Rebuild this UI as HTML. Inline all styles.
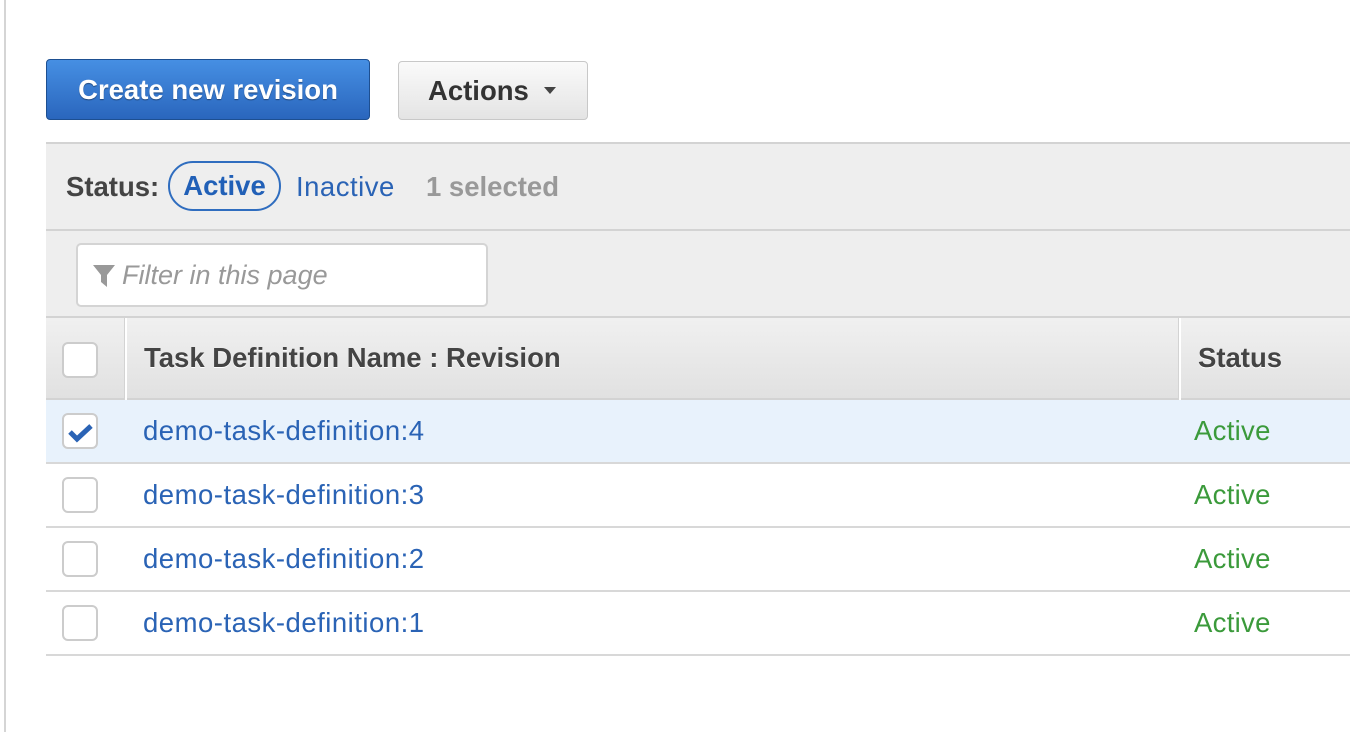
<!DOCTYPE html>
<html><head><style>
*{box-sizing:border-box;margin:0;padding:0}
body{width:1350px;height:732px;background:#fff;font-family:"Liberation Sans",Arial,sans-serif;position:relative;overflow:hidden}
.vl{position:absolute;left:4px;top:0;width:2px;height:732px;background:#d5d5d5}
.btn1{position:absolute;left:46px;top:59px;width:324px;height:61px;border:1px solid #1d4f91;border-radius:4px;background:linear-gradient(#468fe3,#2a66bd);color:#fff;font-weight:bold;font-size:27.5px;text-align:center;line-height:59px;text-shadow:0 1px 1px rgba(0,0,0,.4)}
.btn2{position:absolute;left:398px;top:61px;width:190px;height:59px;border:1px solid #c8c8c8;border-radius:4px;background:linear-gradient(#fafafa,#e4e4e4);color:#333;font-weight:bold;font-size:27.5px;line-height:57px;padding-left:29px}
.btn2 .car{position:absolute;left:145px;top:25px;border-left:6px solid transparent;border-right:6px solid transparent;border-top:7px solid #444}
.sec{position:absolute;left:46px;width:1304px;background:#eee;border-top:2px solid #d3d3d3}
.s1{top:142px;height:89px}
.s2{top:229px;height:89px}
.lbl{position:absolute;top:27px;font-size:27.5px}
.reg{letter-spacing:.5px}
.pill{position:absolute;left:122px;top:17px;width:113px;height:50px;border:2px solid #2f6dbf;border-radius:25px;color:#2160b7;font-weight:bold;font-size:27.5px;text-align:center;line-height:46px}
.inp{position:absolute;left:30px;top:12px;width:412px;height:64px;background:#fff;border:2px solid #d4d4d4;border-radius:5px;color:#999;font-style:italic;font-size:27px;line-height:60px;padding-left:44px}
.hdr{position:absolute;left:46px;top:316px;width:1304px;height:84px;background:linear-gradient(#f0f0f0,#e1e1e1);border-top:2px solid #d3d3d3;border-bottom:2px solid #d3d3d3}
.hdr .t{position:absolute;top:24px;font-weight:bold;font-size:27.5px;color:#444;text-shadow:0 1px 0 #fff}
.div{position:absolute;top:0;width:3px;height:82px;border-left:1px solid #d3d3d3;background:#fff;}
.cb{position:absolute;left:16px;width:36px;height:36px;border:2px solid #ccc;border-radius:6px;background:#fff}
.row{position:absolute;left:46px;width:1304px;height:64px;border-bottom:2px solid #d8d8d8}
.row a{position:absolute;left:97px;top:15px;font-size:27.5px;letter-spacing:.5px;color:#2a63b5;text-decoration:none}
.row .st{position:absolute;left:1148px;top:15px;font-size:27.5px;letter-spacing:.3px;color:#3b9a3b}
</style></head><body>
<div class="vl"></div>
<div class="btn1">Create new revision</div>
<div class="btn2">Actions<span class="car"></span></div>
<div class="sec s1">
<span class="lbl" style="left:20px;font-weight:bold;color:#444">Status:</span>
<div class="pill">Active</div>
<span class="lbl reg" style="left:250px;color:#2a63b5">Inactive</span>
<span class="lbl" style="left:380px;font-weight:bold;color:#999">1 selected</span>
</div>
<div class="sec s2">
<div class="inp"><svg style="position:absolute;left:15px;top:20px" width="22" height="22" viewBox="0 0 22 22"><path d="M0 0H22L14 10V22L8 17V10Z" fill="#999"/></svg>Filter in this page</div>
</div>
<div class="hdr">
<div class="cb" style="top:24px"></div>
<div class="div" style="left:78px"></div>
<span class="t" style="left:98px">Task Definition Name : Revision</span>
<div class="div" style="left:1132px"></div>
<span class="t" style="left:1152px">Status</span>
</div>
<div class="row" style="top:400px;background:#e8f2fc"><div class="cb" style="top:13px"><svg width="32" height="32" viewBox="0 0 32 32"><path d="M6 17L13 24L27 11" stroke="#2a63b5" stroke-width="5" fill="none"/></svg></div><a>demo-task-definition:4</a><span class="st">Active</span></div>
<div class="row" style="top:464px"><div class="cb" style="top:13px"></div><a>demo-task-definition:3</a><span class="st">Active</span></div>
<div class="row" style="top:528px"><div class="cb" style="top:13px"></div><a>demo-task-definition:2</a><span class="st">Active</span></div>
<div class="row" style="top:592px"><div class="cb" style="top:13px"></div><a>demo-task-definition:1</a><span class="st">Active</span></div>
</body></html>
